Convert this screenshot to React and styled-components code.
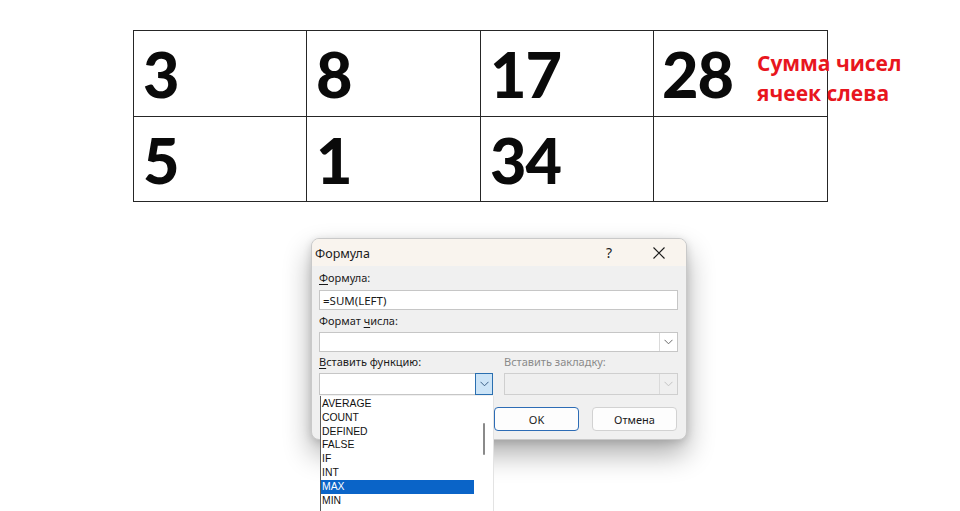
import React from "react";
import styled, { createGlobalStyle } from "styled-components";

const Global = createGlobalStyle`
  html, body { margin: 0; padding: 0; background: #ffffff; overflow: hidden; }
  body { width: 960px; height: 511px; }
`;

const Page = styled.div`
  width: 960px;
  height: 511px;
  overflow: hidden;
  display: flex;
  flex-direction: column;
`;

const TableWrap = styled.div`
  position: relative;
  margin: 30px 0 0 133px;
  width: 695px;
`;

const Grid = styled.div`
  display: grid;
  grid-template-columns: 173px 174px 173px 174px;
  grid-template-rows: 86px 85px;
  border-left: 1px solid #262626;
  border-top: 1px solid #262626;
`;

const Cell = styled.div`
  box-sizing: border-box;
  border-right: 1px solid #262626;
  border-bottom: 1px solid #262626;
  padding: 11px 0 0 ${(p) => p.$pad}px;
  font-family: "Lato", "Open Sans", sans-serif;
  font-weight: 900;
  font-size: 63px;
  line-height: 63px;
  letter-spacing: -1px;
  color: #0a0a0a;
`;

const Note = styled.div`
  position: absolute;
  left: 624px;
  top: 18px;
  font-family: "Open Sans", "Lato", sans-serif;
  font-weight: 700;
  font-size: 21px;
  line-height: 30px;
  color: #e8161e;
  white-space: nowrap;
`;

const Dialog = styled.div`
  position: relative;
  box-sizing: border-box;
  margin: 36px 0 0 311px;
  width: 376px;
  height: 202px;
  background: #f0f0f0;
  border: 1px solid #c9c9c9;
  border-radius: 8px;
  box-shadow: 0 14px 28px rgba(0, 0, 0, 0.32), 0 2px 8px rgba(0, 0, 0, 0.14);
  font-family: "Noto Sans", "Open Sans", sans-serif;
  color: #1a1a1a;
  display: flex;
  flex-direction: column;
`;

const TitleBar = styled.div`
  height: 27px;
  display: flex;
  align-items: center;
  background: #f9f4ee;
  border-radius: 7px 7px 0 0;
  padding-left: 3px;
`;

const Title = styled.div`
  flex: 1;
  font-size: 12.5px;
  padding-top: 2px;
`;

const TitleButton = styled.div`
  width: 46px;
  height: 27px;
  display: flex;
  align-items: center;
  justify-content: center;
  margin-right: 4px;
  font-size: 14px;
  color: #222;
`;

const Body = styled.div`
  display: flex;
  flex-direction: column;
  padding: 0 8px 0 7px;
`;

const Label = styled.div`
  font-size: 11px;
  line-height: 14px;
  margin-top: ${(p) => p.$mt}px;
  color: ${(p) => (p.$disabled ? "#8a8a8a" : "#1a1a1a")};
  white-space: nowrap;
`;

const Key = styled.span`
  text-decoration: underline;
  text-underline-offset: 2px;
`;

const Input = styled.div`
  box-sizing: border-box;
  height: 20px;
  margin-top: ${(p) => p.$mt}px;
  background: #ffffff;
  border: 1px solid #c6c6c6;
  display: flex;
  align-items: center;
  padding-left: 3px;
  font-size: 11.5px;
`;

const Select = styled.div`
  box-sizing: border-box;
  height: ${(p) => p.$h}px;
  margin-top: ${(p) => p.$mt || 0}px;
  background: ${(p) => (p.$disabled ? "#efefef" : "#ffffff")};
  border: 1px solid ${(p) => (p.$disabled ? "#cfcfcf" : "#c6c6c6")};
  display: flex;
  justify-content: flex-end;
  position: relative;
`;

const DropBtn = styled.div`
  box-sizing: border-box;
  width: ${(p) => p.$w}px;
  margin: ${(p) => (p.$active ? "-1px -1px -1px 0" : "0")};
  display: flex;
  align-items: center;
  justify-content: center;
  background: ${(p) => (p.$active ? "#cce4f7" : "transparent")};
  border: ${(p) => (p.$active ? "1px solid #2a6fb0" : "none")};
  border-left: 1px solid ${(p) => (p.$active ? "#2a6fb0" : "#dadada")};
`;

const Row = styled.div`
  display: flex;
  gap: ${(p) => p.$gap}px;
  margin-top: ${(p) => p.$mt}px;
`;

const Col = styled.div`
  width: ${(p) => p.$w}px;
  display: flex;
  flex-direction: column;
  position: relative;
`;

const Buttons = styled.div`
  display: flex;
  justify-content: flex-end;
  gap: 13px;
  margin-top: 12px;
  padding-right: 1px;
`;

const Button = styled.div`
  box-sizing: border-box;
  width: 85px;
  height: 24px;
  border-radius: 4px;
  display: flex;
  align-items: center;
  justify-content: center;
  font-size: 11px;
  background: #fdfdfd;
  border: 1px solid ${(p) => (p.$primary ? "#2d6cb5" : "#d2d2d2")};
`;

const List = styled.div`
  position: absolute;
  top: 22px;
  left: 0;
  width: 174px;
  height: 118px;
  box-sizing: border-box;
  background: #ffffff;
  border-left: 1px solid #5c5c5c;
  border-right: 1px solid #e3e3e3;
  display: flex;
  z-index: 2;
  overflow: hidden;
`;

const Items = styled.div`
  flex: 1;
  padding-top: 1px;
`;

const Item = styled.div`
  height: 13.8px;
  line-height: 13.8px;
  padding-left: 1px;
  font-family: "Liberation Sans", Arial, sans-serif;
  font-size: 10.4px;
  color: ${(p) => (p.$sel ? "#ffffff" : "#111")};
  background: ${(p) => (p.$sel ? "#0a64c8" : "transparent")};
`;

const ScrollTrack = styled.div`
  width: 19px;
  position: relative;
`;

const Thumb = styled.div`
  position: absolute;
  left: 9px;
  top: 27px;
  width: 2px;
  height: 32px;
  border-radius: 1px;
  background: #8a8a8a;
`;

const Chevron = ({ color = "#6b6b6b" }) => (
  <svg width="9" height="6" viewBox="0 0 9 6">
    <polyline points="0.5,0.8 4.5,4.8 8.5,0.8" fill="none" stroke={color} strokeWidth="1" />
  </svg>
);

const CloseIcon = () => (
  <svg width="12" height="12" viewBox="0 0 12 12">
    <path d="M0.5 0.5 L11.5 11.5 M11.5 0.5 L0.5 11.5" stroke="#1a1a1a" strokeWidth="1.1" />
  </svg>
);

const functions = ["AVERAGE", "COUNT", "DEFINED", "FALSE", "IF", "INT", "MAX", "MIN"];

const rows = [
  [
    { v: "3", pad: 9 },
    { v: "8", pad: 9 },
    { v: "17", pad: 9 },
    { v: "28", pad: 8 },
  ],
  [
    { v: "5", pad: 9 },
    { v: "1", pad: 9 },
    { v: "34", pad: 9 },
    { v: "", pad: 9 },
  ],
];

export default function App() {
  return (
    <Page>
      <Global />
      <TableWrap>
        <Grid>
          {rows.flat().map((c, i) => (
            <Cell key={i} $pad={c.pad}>
              {c.v}
            </Cell>
          ))}
        </Grid>
        <Note>
          Сумма чисел
          <br />
          ячеек слева
        </Note>
      </TableWrap>

      <Dialog>
        <TitleBar>
          <Title>Формула</Title>
          <TitleButton>?</TitleButton>
          <TitleButton>
            <CloseIcon />
          </TitleButton>
        </TitleBar>
        <Body>
          <Label $mt={5}>
            <Key>Ф</Key>ормула:
          </Label>
          <Input $mt={5}>=SUM(LEFT)</Input>
          <Label $mt={4}>
            Формат <Key>ч</Key>исла:
          </Label>
          <Select $h={20} $mt={4}>
            <DropBtn $w={18}>
              <Chevron />
            </DropBtn>
          </Select>
          <Row $gap={11} $mt={3}>
            <Col $w={174}>
              <Label $mt={0}>
                <Key>В</Key>ставить функцию:
              </Label>
              <Select $h={22} $mt={4}>
                <DropBtn $w={18} $active>
                  <Chevron color="#3b5f86" />
                </DropBtn>
                <List>
                  <Items>
                    {functions.map((f) => (
                      <Item key={f} $sel={f === "MAX"}>
                        {f}
                      </Item>
                    ))}
                  </Items>
                  <ScrollTrack>
                    <Thumb />
                  </ScrollTrack>
                </List>
              </Select>
            </Col>
            <Col $w={174}>
              <Label $mt={0} $disabled>
                Вставить закладку:
              </Label>
              <Select $h={22} $mt={4} $disabled>
                <DropBtn $w={18}>
                  <Chevron color="#c4c4c4" />
                </DropBtn>
              </Select>
            </Col>
          </Row>
          <Buttons>
            <Button $primary>OK</Button>
            <Button>Отмена</Button>
          </Buttons>
        </Body>
      </Dialog>
    </Page>
  );
}
